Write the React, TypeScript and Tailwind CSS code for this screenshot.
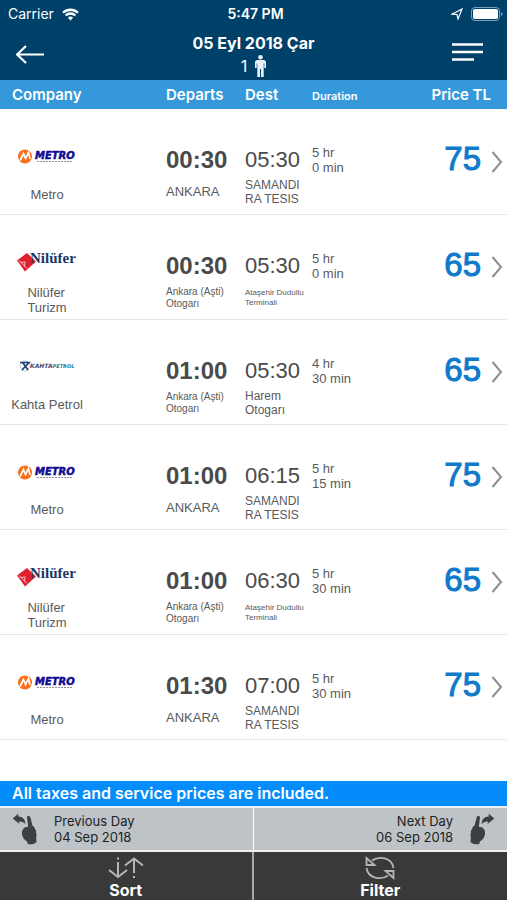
import type { ReactNode } from 'react';

type Company = 'metro' | 'nilufer' | 'kahta';

interface Stop {
  name: string;
  size: 'lg' | 'md' | 'sm' | 'xs';
}

interface Trip {
  company: Company;
  departs: string;
  from: Stop;
  arrives: string;
  to: Stop;
  hours: number;
  minutes: number;
  price: number;
}

const ankara: Stop = { name: 'ANKARA', size: 'lg' };
const asti: Stop = { name: 'Ankara (Aşti)\nOtogarı', size: 'sm' };
const samandira: Stop = { name: 'SAMANDI\nRA TESIS', size: 'md' };
const dudullu: Stop = { name: 'Ataşehir Dudullu\nTerminali', size: 'xs' };
const harem: Stop = { name: 'Harem\nOtogarı', size: 'md' };

const trips: Trip[] = [
  { company: 'metro', departs: '00:30', from: ankara, arrives: '05:30', to: samandira, hours: 5, minutes: 0, price: 75 },
  { company: 'nilufer', departs: '00:30', from: asti, arrives: '05:30', to: dudullu, hours: 5, minutes: 0, price: 65 },
  { company: 'kahta', departs: '01:00', from: asti, arrives: '05:30', to: harem, hours: 4, minutes: 30, price: 65 },
  { company: 'metro', departs: '01:00', from: ankara, arrives: '06:15', to: samandira, hours: 5, minutes: 15, price: 75 },
  { company: 'nilufer', departs: '01:00', from: asti, arrives: '06:30', to: dudullu, hours: 5, minutes: 30, price: 65 },
  { company: 'metro', departs: '01:30', from: ankara, arrives: '07:00', to: samandira, hours: 5, minutes: 30, price: 75 },
];

const companyNames: Record<Company, string> = {
  metro: 'Metro',
  nilufer: 'Nilüfer\nTurizm',
  kahta: 'Kahta Petrol',
};

const stopStyles: Record<Stop['size'], string> = {
  lg: 'text-[13px] leading-[28px]',
  md: 'text-[12px] leading-[14px]',
  sm: 'pt-[2px] text-[10px] leading-[12px]',
  xs: 'pt-1 text-[8px] leading-[10px]',
};

function MetroLogo() {
  return (
    <svg width="60" height="24" viewBox="0 0 60 24" aria-hidden="true">
      <circle cx="8" cy="12.5" r="7" fill="#f9701b" />
      <path d="M3 16.5 6.500 9.500l2 5 3-6 1.500 6.500" fill="none" stroke="#fff" strokeWidth="1.7" />
      <text x="18" y="15" fill="#100c92" stroke="#100c92" strokeWidth=".5" fontFamily="'DejaVu Sans', sans-serif" fontSize="10" fontWeight="700" fontStyle="italic">METRO</text>
      <path d="M20 17.500h35" stroke="#8d8d9c" strokeWidth="1" strokeDasharray="2 1" />
    </svg>
  );
}

function NiluferLogo() {
  return (
    <svg width="60" height="24" viewBox="0 0 60 24" aria-hidden="true">
      <path d="M0 10.500 10 3l9 8.500L8 21.500z" fill="#e01f2d" />
      <path d="m2 10.500 8 8M3.500 12.500l4-.5M7.500 16.500l.5-5" stroke="#f8c3c6" strokeWidth="1" fill="none" />
      <text x="13" y="13" fill="#1a3768" fontFamily="'Liberation Serif', serif" fontSize="15" fontWeight="700">Nilüfer</text>
    </svg>
  );
}

function KahtaLogo() {
  return (
    <svg width="60" height="24" viewBox="0 0 60 24" aria-hidden="true">
      <circle cx="8" cy="11" r="5" fill="none" stroke="#b9d3e0" strokeWidth="1" />
      <path d="M3 7.500h9L5 15M6 8l5 7" fill="none" stroke="#1f3f6e" strokeWidth="1.700" />
      <text x="13" y="13" fontFamily="'DejaVu Sans', sans-serif" fontSize="6" fontWeight="700" fontStyle="italic">
        <tspan fill="#4a4670">KAHTA</tspan>
        <tspan fill="#23799b" fontSize="5">PETROL</tspan>
      </text>
    </svg>
  );
}

const logos: Record<Company, ReactNode> = {
  metro: <MetroLogo />,
  nilufer: <NiluferLogo />,
  kahta: <KahtaLogo />,
};

function HandIcon({ flipped = false }: { flipped?: boolean }) {
  return (
    <svg
      width="26"
      height="32"
      viewBox="0 0 26 32"
      fill="#3d3f42"
      className={flipped ? '-scale-x-100' : ''}
      aria-hidden="true"
    >
      <path d="M.7 5.500 6.300.8v2.700c4.200.2 7 2.500 7 7.800-1.500-2.200-3.500-3-6.300-2.800l.5 2.500z" />
      <path d="M15 4.500c.2-1.800 2.700-2 3.300-.2l2.200 8.500c1.500.5 2.200 1.700 2.300 3 1.200 1.200 1.500 2.500 1.200 4 .8 1.500.5 3.500.2 5l.3 4.200c-2 2.300-6 2.800-8.700 2l-.8-2.500c-2.200-1.500-4.500-4-4.800-6.500-.5-2.500-.3-4.500 1-6 1-1.500 2.500-2 5-2.200z" />
    </svg>
  );
}

function StatusBar() {
  return (
    <div className="grid h-7 grid-cols-3 items-center pr-1 pl-2 text-[14px] leading-5">
      <div className="flex items-center gap-2">
        <span>Carrier</span>
        <svg width="17" height="13" viewBox="0 0 17 13" fill="none" stroke="currentColor" strokeWidth="2.300" aria-hidden="true">
          <path d="M1 4.800a10.700 10.700 0 0 1 15 0M3.700 7.500a6.800 6.800 0 0 1 9.600 0" />
          <path d="m8.500 12.500-2.600-2.800a3.700 3.700 0 0 1 5.200 0z" fill="currentColor" stroke="none" />
        </svg>
      </div>
      <div className="text-center font-semibold">5:47 PM</div>
      <div className="flex items-center justify-end gap-2">
        <svg width="12" height="12" viewBox="0 0 12 12" fill="none" stroke="currentColor" strokeWidth="1.200" aria-hidden="true">
          <path d="M1 6.200 11 1 7 11 6 6.500z" />
        </svg>
        <svg width="32" height="14" viewBox="0 0 32 14" aria-hidden="true">
          <rect x=".5" y=".5" width="28" height="13" rx="3.500" fill="none" stroke="#7f9db4" />
          <rect x="2" y="2" width="25" height="10" rx="2" fill="#fff" />
          <path d="M30 5c2 .5 2 3.500 0 4z" fill="#7f9db4" />
        </svg>
      </div>
    </div>
  );
}

function Header() {
  return (
    <header className="bg-[#00416a] text-white">
      <StatusBar />
      <div className="grid h-[52px] grid-cols-[1fr_auto_1fr] items-start">
        <button type="button" aria-label="Back" className="justify-self-start pt-4 pl-4">
          <svg width="28" height="20" viewBox="0 0 28 20" fill="none" stroke="currentColor" strokeWidth="2.200" aria-hidden="true">
            <path d="M28 10.500H1M10 2 1 10.500l9 8.500" />
          </svg>
        </button>
        <div className="flex flex-col items-center pt-1">
          <h1 className="text-[16px] leading-[22px] font-bold">05 Eyl 2018 Çar</h1>
          <p className="flex items-center gap-2 text-[16px] leading-6">
            <span>1</span>
            <svg width="11" height="22" viewBox="0 0 11 22" fill="#e9f1f6" aria-hidden="true">
              <circle cx="5.500" cy="2.300" r="2.300" />
              <path d="M2.500 5h6C10 5 11 6 11 7.500V13H9.300V8.500h-.6V22h-2.700v-8H5v8H2.300V8.500h-.6V13H0V7.500C0 6 1 5 2.500 5z" />
            </svg>
          </p>
        </div>
        <button type="button" aria-label="Menu" className="justify-self-end pt-[14px] pr-6">
          <svg width="31" height="20" viewBox="0 0 31 20" stroke="currentColor" strokeWidth="2.400" aria-hidden="true">
            <path d="M0 2.500h31M0 10h31M0 17.500h22" />
          </svg>
        </button>
      </div>
    </header>
  );
}

function TripRow({ trip }: { trip: Trip }) {
  return (
    <tr className="h-[105px] border-b border-[#e6e6e6] align-top">
      <td>
        <div className="flex w-[94px] flex-col items-center pt-[35px]">
          {logos[trip.company]}
          <div className="mt-[11px] flex h-[30px] items-center text-[13px] leading-[15px] whitespace-pre-line">
            {companyNames[trip.company]}
          </div>
        </div>
      </td>
      <td className="pt-[37px]">
        <div className="text-[24px] leading-[28px] font-bold text-[#4a4a4a]">{trip.departs}</div>
        <div className={`mt-1 whitespace-pre ${stopStyles[trip.from.size]}`}>{trip.from.name}</div>
      </td>
      <td className="pt-[37px]">
        <div className="text-[22px] leading-[28px] text-[#4a4a4a]">{trip.arrives}</div>
        <div className={`mt-1 whitespace-pre ${stopStyles[trip.to.size]}`}>{trip.to.name}</div>
      </td>
      <td className="pt-9 text-[13px] leading-[15px]">
        {trip.hours} hr
        <br />
        {trip.minutes} min
      </td>
      <td className="pt-8 pr-1">
        <div className="flex items-center justify-end gap-[10px]">
          <span className="text-[33px] leading-9 text-[#0f7acb] [-webkit-text-stroke:1px_#0f7acb]">{trip.price}</span>
          <button type="button" aria-label={`Select ${trip.departs} departure`} className="pt-[5px]">
            <svg width="12" height="22" viewBox="0 0 12 22" fill="none" stroke="#8e8e8e" strokeWidth="2" aria-hidden="true">
              <path d="m1.500 1 8.500 10-8.500 10" />
            </svg>
          </button>
        </div>
      </td>
    </tr>
  );
}

function TripTable() {
  return (
    <table className="w-full table-fixed border-collapse text-left font-['Liberation_Sans',Arial,sans-serif] text-[#5a5a5a]">
      <colgroup>
        <col />
        <col className="w-[79px]" />
        <col className="w-[67px]" />
        <col className="w-[95px]" />
        <col className="w-[100px]" />
      </colgroup>
      <thead className="bg-[#3498db] font-['Inter',sans-serif] text-[15px] leading-5 text-white">
        <tr className="h-[29px] align-baseline">
          <th className="pt-[5px] pl-3 font-semibold">Company</th>
          <th className="pt-[5px] font-semibold">Departs</th>
          <th className="pt-[5px] font-semibold">Dest</th>
          <th className="pt-[5px] text-[11px] font-semibold">Duration</th>
          <th className="pt-[5px] pr-4 text-right font-semibold">Price TL</th>
        </tr>
      </thead>
      <tbody>
        {trips.map((trip, i) => (
          <TripRow key={i} trip={trip} />
        ))}
      </tbody>
    </table>
  );
}

function Footer() {
  return (
    <footer className="mt-auto">
      <p className="bg-[#048cfb] px-3 text-[16px] leading-[25px] font-semibold text-white">
        All taxes and service prices are included.
      </p>
      <div className="grid grid-cols-2 divide-x divide-white border-y-2 border-[#eef0f1] bg-[#bdc3c7] text-[13px] leading-4 text-[#222]">
        <button type="button" className="flex h-[42px] items-center gap-4 pl-3 text-left">
          <HandIcon />
          <span>
            Previous Day
            <br />
            04 Sep 2018
          </span>
        </button>
        <button type="button" className="flex h-[42px] items-center justify-end gap-4 pr-3 text-right">
          <span>
            Next Day
            <br />
            06 Sep 2018
          </span>
          <HandIcon flipped />
        </button>
      </div>
      <div className="grid grid-cols-2 divide-x-2 divide-[#a8a8a8] bg-[#393939] text-[16px] leading-5 font-bold text-white">
        <button type="button" className="flex h-12 flex-col items-center justify-end">
          <svg width="36" height="24" viewBox="0 0 36 24" fill="none" stroke="#b5b5b5" strokeWidth="2" aria-hidden="true">
            <path d="M10 6v15M1 14l9 7 9-7M10 1.500v2M26 17V3M17 9.500 26 2.500l9 7M26 20v2" />
          </svg>
          Sort
        </button>
        <button type="button" className="flex h-12 flex-col items-center justify-end">
          <svg width="32" height="24" viewBox="0 0 32 24" fill="none" stroke="#b5b5b5" strokeWidth="1.800" aria-hidden="true">
            <path d="M8 4.500C15-.5 28 1.500 29.500 12M2.500 2v7h8zM24 19.500C17 24.500 4 22.500 2.500 12M29.500 22v-7h-8z" />
          </svg>
          Filter
        </button>
      </div>
    </footer>
  );
}

export default function App() {
  return (
    <div className="flex min-h-screen flex-col bg-white font-['Inter',sans-serif]">
      <Header />
      <TripTable />
      <Footer />
    </div>
  );
}
